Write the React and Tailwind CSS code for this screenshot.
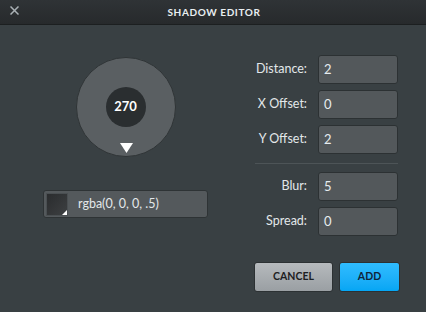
import React from "react";

const Row = ({ label, value }) => (
  <div className="flex items-center">
    <div className="w-[53px] text-right text-[12.5px] text-[#e3e8ea] pr-[1px]">{label}</div>
    <div className="ml-[10px] w-[80px] h-[29px] rounded-[3px] bg-[#53585b] border border-[#2c3133] flex items-center pl-[5px] text-[13px] text-[#e6ecef]">
      {value}
    </div>
  </div>
);

export default function App() {
  return (
    <div
      className="w-[426px] h-[312px] bg-[#394043] flex flex-col overflow-hidden"
      style={{ fontFamily: "Lato, 'Open Sans', sans-serif" }}
    >
      <div className="h-[25px] shrink-0 bg-gradient-to-b from-[#2f3336] to-[#272a2c] border-b border-[#1c1f20] flex items-center relative">
        <svg className="absolute left-[10px] top-[6px]" width="9" height="9" viewBox="0 0 9 9">
          <path d="M0.5 0.5 L8.5 8.5 M8.5 0.5 L0.5 8.5" stroke="#aab1b5" strokeWidth="1.5" />
        </svg>
        <div className="w-full text-center text-[10px] font-bold tracking-[0.6px] text-[#e8eef1] pl-[2px]">
          SHADOW EDITOR
        </div>
      </div>
      <div className="flex flex-1">
        <div className="w-[255px] shrink-0 pl-[43px] flex flex-col">
          <div className="w-[165px] flex justify-center mt-[32px]">
            <div className="relative w-[100px] h-[100px] rounded-full bg-[#5a5f62] border border-[#2f3436] flex items-center justify-center">
              <div className="w-[40px] h-[40px] rounded-full bg-[#2a2e30] flex items-center justify-center text-[13px] font-bold text-white">
                270
              </div>
              <svg className="absolute left-[43px] top-[85px]" width="13" height="10" viewBox="0 0 13 10">
                <path d="M0 0 L13 0 L6.5 10 Z" fill="#ffffff" />
              </svg>
            </div>
          </div>
          <div className="mt-[33px] w-[165px] h-[28px] rounded-[3px] bg-[#54595c] border border-[#2e3335] flex items-center pl-[2px]">
            <div className="relative w-[22px] h-[23px] bg-gradient-to-br from-[#2a2c2e] to-[#3d4042] border border-[#4a4f52]">
              <svg className="absolute right-0 bottom-0" width="5" height="5" viewBox="0 0 5 5">
                <path d="M5 0 L5 5 L0 5 Z" fill="#ffffff" />
              </svg>
            </div>
            <div className="ml-[10px] text-[12.5px] text-[#e3e8ea]">rgba(0, 0, 0, .5)</div>
          </div>
        </div>
        <div className="flex flex-col pt-[30px]">
          <div className="flex flex-col gap-[6px]">
            <Row label="Distance:" value="2" />
            <Row label="X Offset:" value="0" />
            <Row label="Y Offset:" value="2" />
          </div>
          <div className="mt-[9px] w-[143px] h-px bg-[#4d5457]" />
          <div className="mt-[8px] flex flex-col gap-[6px]">
            <Row label="Blur:" value="5" />
            <Row label="Spread:" value="0" />
          </div>
          <div className="mt-[26px] -ml-px flex gap-[6px]">
            <div className="w-[79px] h-[30px] rounded-[3px] bg-gradient-to-b from-[#b6babd] to-[#9a9fa3] border border-[#2c3133] flex items-center justify-center text-[10.5px] font-bold text-[#1d2022]">
              CANCEL
            </div>
            <div className="w-[61px] h-[30px] rounded-[3px] bg-gradient-to-b from-[#2fbcff] to-[#05a6f4] border border-[#2c3133] flex items-center justify-center text-[10.5px] font-bold text-[#10253a]">
              ADD
            </div>
          </div>
        </div>
      </div>
    </div>
  );
}
